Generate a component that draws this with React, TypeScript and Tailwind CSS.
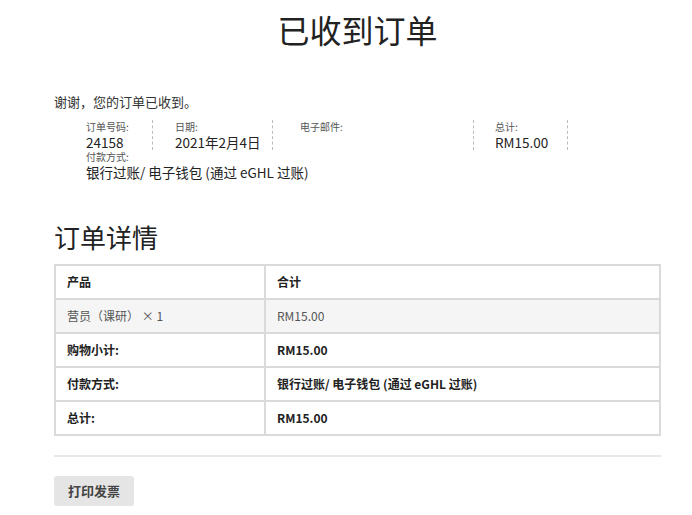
export default function App() {
  const font = { fontFamily: '"Noto Sans CJK SC", "Noto Sans", sans-serif' }
  return (
    <div style={font} className="min-h-[515px] bg-white text-[#222]">
      <div className="ml-[54px] w-[607px] pt-[9px]">
        <h1 className="text-center text-[32px] leading-[40px] text-[#222]">已收到订单</h1>

        <p className="mt-[44px] text-[13px] leading-[18px] text-[#333]">谢谢，您的订单已收到。</p>

        <ul className="mt-[9px] ml-[32px] flex flex-wrap">
          <li className="mr-[22px] w-[67px] border-r border-dashed border-[#bbb]">
            <div className="text-[10px] leading-[14px] text-[#555]">订单号码:</div>
            <div className="text-[13.5px] leading-[16px] text-[#222]">24158</div>
          </li>
          <li className="mr-[27px] w-[98px] border-r border-dashed border-[#bbb]">
            <div className="text-[10px] leading-[14px] text-[#555]">日期:</div>
            <div className="text-[13.5px] leading-[16px] text-[#222]">2021年2月4日</div>
          </li>
          <li className="mr-[21px] w-[174px] border-r border-dashed border-[#bbb]">
            <div className="text-[10px] leading-[14px] text-[#555]">电子邮件:</div>
            <div className="text-[13.5px] leading-[16px] text-[#222]"></div>
          </li>
          <li className="w-[73px] border-r border-dashed border-[#bbb]">
            <div className="text-[10px] leading-[14px] text-[#555]">总计:</div>
            <div className="text-[13.5px] leading-[16px] text-[#222]">RM15.00</div>
          </li>
          <li className="w-full">
            <div className="text-[10px] leading-[14px] text-[#555]">付款方式:</div>
            <div className="text-[13.5px] leading-[16px] text-[#222]">银行过账/ 电子钱包 (通过 eGHL 过账)</div>
          </li>
        </ul>

        <h2 className="mt-[40px] text-[26px] leading-[34px] text-[#222]">订单详情</h2>

        <table className="mt-[10px] w-full border-collapse border-2 border-[#dadada] text-[12px]">
          <tbody>
            <tr className="h-[34px]">
              <th className="w-[210px] border-2 border-[#dadada] px-[11px] text-left font-bold">产品</th>
              <th className="border-2 border-[#dadada] px-[11px] text-left font-bold">合计</th>
            </tr>
            <tr className="h-[34px] bg-[#f5f5f5] text-[#555]">
              <td className="border-2 border-[#dadada] px-[11px]">营员（课研） × 1</td>
              <td className="border-2 border-[#dadada] px-[11px]">RM15.00</td>
            </tr>
            <tr className="h-[34px]">
              <th className="border-2 border-[#dadada] px-[11px] text-left font-bold">购物小计:</th>
              <td className="border-2 border-[#dadada] px-[11px] font-bold">RM15.00</td>
            </tr>
            <tr className="h-[34px]">
              <th className="border-2 border-[#dadada] px-[11px] text-left font-bold">付款方式:</th>
              <td className="border-2 border-[#dadada] px-[11px] font-bold">银行过账/ 电子钱包 (通过 eGHL 过账)</td>
            </tr>
            <tr className="h-[34px]">
              <th className="border-2 border-[#dadada] px-[11px] text-left font-bold">总计:</th>
              <td className="border-2 border-[#dadada] px-[11px] font-bold">RM15.00</td>
            </tr>
          </tbody>
        </table>

        <div className="mt-[19px] h-[2px] bg-[#e8e8e8]" />

        <button className="mt-[19px] h-[30px] w-[80px] rounded-[3px] bg-[#e5e5e5] text-[13px] font-bold text-[#444]">
          打印发票
        </button>
      </div>
    </div>
  )
}
